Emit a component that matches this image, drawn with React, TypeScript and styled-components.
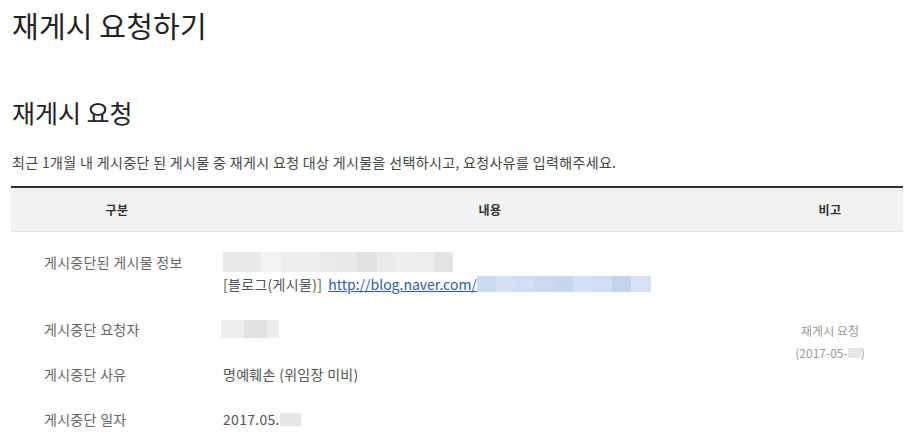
import React from "react"
import styled, { createGlobalStyle } from "styled-components"

const GlobalStyle = createGlobalStyle`
  html, body {
    margin: 0;
    padding: 0;
    background: #fff;
  }
  body {
    font-family: "Noto Sans CJK KR", "Noto Sans", sans-serif;
    color: #333;
  }
`

const Page = styled.div`
  padding: 0 15px 0 11px;
  width: 892px;
`

const Title = styled.h1`
  margin: 0;
  padding: 5px 0 0 1px;
  font-size: 29px;
  line-height: 40px;
  font-weight: 400;
  color: #222;
  letter-spacing: 0.2px;
`

const SubTitle = styled.h2`
  margin: 50px 0 0;
  padding-left: 1px;
  font-size: 25px;
  line-height: 34px;
  font-weight: 400;
  color: #222;
`

const Desc = styled.p`
  margin: 23px 0 0;
  padding-left: 1px;
  font-size: 14px;
  line-height: 20px;
  letter-spacing: 0.35px;
  color: #444;
`

const Table = styled.div`
  margin-top: 14px;
  border-top: 2px solid #333;
`

const Head = styled.div`
  display: grid;
  grid-template-columns: 212px 534px 146px;
  height: 43px;
  align-items: center;
  background: #f2f2f2;
  border-bottom: 1px solid #e4e4e4;
`

const HeadCell = styled.div`
  text-align: center;
  font-size: 12px;
  font-weight: 700;
  letter-spacing: 0.5px;
  color: #333;
`

const Body = styled.div`
  display: grid;
  grid-template-columns: 212px 534px 146px;
  padding-top: 8px;
`

const Label = styled.div`
  padding: 11px 0 12px 33px;
  font-size: 14px;
  line-height: 22px;
  letter-spacing: 0.3px;
  color: #666;
`

const Content = styled.div`
  grid-column: 2;
  padding: 11px 0 12px;
  font-size: 14px;
  line-height: 22px;
  letter-spacing: 0.3px;
  color: #555;
`

const Remark = styled.div`
  grid-column: 3;
  grid-row: 1 / span 4;
  align-self: center;
  text-align: center;
  font-size: 12px;
  line-height: 22px;
  color: #999;
  padding-top: 2px;
`

const Line = styled.div`
  display: flex;
  align-items: center;
  height: 22px;
`

const Link = styled.a`
  color: #2a5ea8;
  text-decoration: underline;
  letter-spacing: 0;
  margin-left: 6px;
`

const Mosaic = styled.span<{ $h: number; $w: number; $offset?: number }>`
  display: inline-flex;
  height: ${(p) => p.$h}px;
  margin-left: ${(p) => p.$offset ?? 0}px;
  span {
    width: ${(p) => p.$w}px;
    height: 100%;
  }
`

const Blur = ({
  colors,
  w,
  h,
  offset,
}: {
  colors: string[]
  w: number
  h: number
  offset?: number
}) => (
  <Mosaic $w={w} $h={h} $offset={offset}>
    {colors.map((c, i) => (
      <span key={i} style={{ background: c }} />
    ))}
  </Mosaic>
)

const grayRow = [
  "#e9e9e9",
  "#e9e9e9",
  "#f4f4f4",
  "#ededed",
  "#ededed",
  "#eaeaea",
  "#e9e9e9",
  "#e2e2e2",
  "#ebebeb",
  "#eeeeee",
  "#ececec",
  "#e4e4e4",
]

const blueRow = [
  "#c9daf1",
  "#d4e1f3",
  "#d0ddf2",
  "#cbd9f0",
  "#c6d6ef",
  "#d3e0f3",
  "#d2dff3",
  "#c3d4ee",
  "#d7e3f4",
]

export default function App() {
  return (
    <>
      <GlobalStyle />
      <Page>
        <Title>재게시 요청하기</Title>
        <SubTitle>재게시 요청</SubTitle>
        <Desc>
          최근 1개월 내 게시중단 된 게시물 중 재게시 요청 대상 게시물을 선택하시고, 요청사유를
          입력해주세요.
        </Desc>
        <Table>
          <Head>
            <HeadCell>구분</HeadCell>
            <HeadCell>내용</HeadCell>
            <HeadCell>비고</HeadCell>
          </Head>
          <Body>
            <Label>게시중단된 게시물 정보</Label>
            <Content>
              <Line>
                <Blur colors={grayRow} w={19.2} h={20} />
              </Line>
              <Line>
                [블로그(게시물)]
                <Link href="#">http://blog.naver.com/</Link>
                <Blur colors={blueRow} w={19.3} h={16} />
              </Line>
            </Content>
            <Remark>
              재게시 요청
              <br />
              (2017-05-
              <Blur colors={["#e6e6e6"]} w={13} h={10} />)
            </Remark>
            <Label>게시중단 요청자</Label>
            <Content>
              <Line>
                <Blur colors={["#eeeeee", "#eeeeee", "#e2e2e2", "#e0e0e0", "#ededed"]} w={11.6} h={18} offset={-2} />
              </Line>
            </Content>
            <Label>게시중단 사유</Label>
            <Content>명예훼손 (위임장 미비)</Content>
            <Label>게시중단 일자</Label>
            <Content>
              <Line>
                2017.05.
                <Blur colors={["#e6e6e6"]} w={21} h={13} />
              </Line>
            </Content>
          </Body>
        </Table>
      </Page>
    </>
  )
}
